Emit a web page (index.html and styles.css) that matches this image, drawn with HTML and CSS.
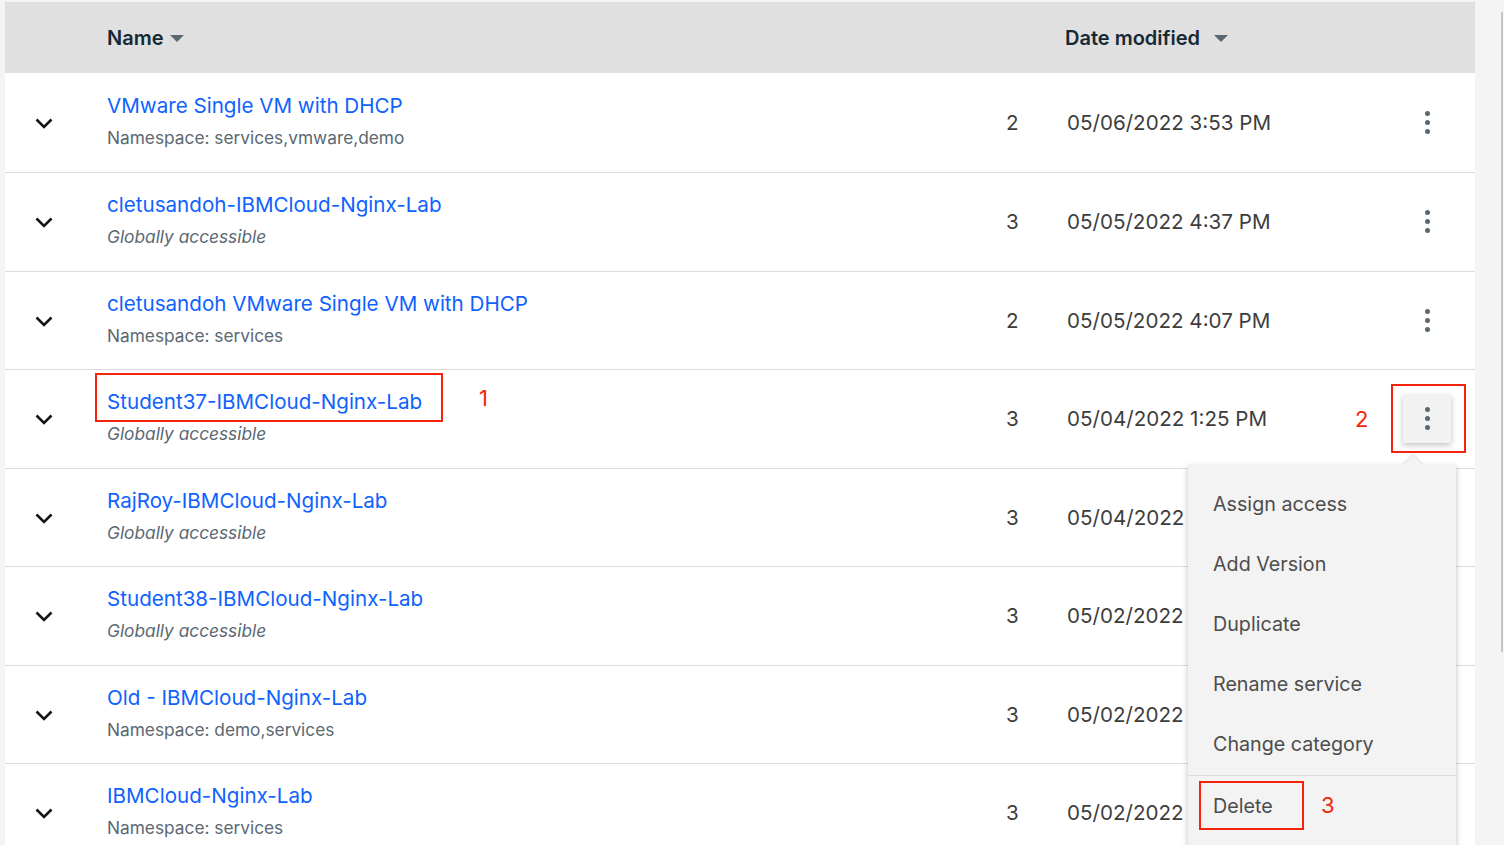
FILE: index.html
```html
<!DOCTYPE html>
<html>
<head>
<meta charset="utf-8">
<link rel="stylesheet" href="styles.css">
</head>
<body>
<div class="page">
  <div class="table">
    <div class="head">
      <div></div>
      <div class="th">Name <span class="sort"></span></div>
      <div></div>
      <div class="th th-date">Date modified <span class="sort sort-gap"></span></div>
      <div></div>
    </div>

    <div class="row">
      <div class="chev"><svg width="18" height="11" viewBox="0 0 18 11"><path d="M1.5 1.5 L9 9 L16.5 1.5" fill="none" stroke="#161616" stroke-width="2.6"/></svg></div>
      <div class="name"><a class="link">VMware Single VM with DHCP</a><div class="sub">Namespace: services,vmware,demo</div></div>
      <div class="ver">2</div>
      <div class="date">05/06/2022 3:53 PM</div>
      <div class="kebab"><span class="dots"><i></i><i></i><i></i></span></div>
    </div>

    <div class="row">
      <div class="chev"><svg width="18" height="11" viewBox="0 0 18 11"><path d="M1.5 1.5 L9 9 L16.5 1.5" fill="none" stroke="#161616" stroke-width="2.6"/></svg></div>
      <div class="name"><a class="link">cletusandoh-IBMCloud-Nginx-Lab</a><div class="sub italic">Globally accessible</div></div>
      <div class="ver">3</div>
      <div class="date">05/05/2022 4:37 PM</div>
      <div class="kebab"><span class="dots"><i></i><i></i><i></i></span></div>
    </div>

    <div class="row">
      <div class="chev"><svg width="18" height="11" viewBox="0 0 18 11"><path d="M1.5 1.5 L9 9 L16.5 1.5" fill="none" stroke="#161616" stroke-width="2.6"/></svg></div>
      <div class="name"><a class="link">cletusandoh VMware Single VM with DHCP</a><div class="sub">Namespace: services</div></div>
      <div class="ver">2</div>
      <div class="date">05/05/2022 4:07 PM</div>
      <div class="kebab"><span class="dots"><i></i><i></i><i></i></span></div>
    </div>

    <div class="row">
      <div class="chev"><svg width="18" height="11" viewBox="0 0 18 11"><path d="M1.5 1.5 L9 9 L16.5 1.5" fill="none" stroke="#161616" stroke-width="2.6"/></svg></div>
      <div class="name"><a class="link">Student37-IBMCloud-Nginx-Lab</a><div class="sub italic">Globally accessible</div></div>
      <div class="ver">3</div>
      <div class="date">05/04/2022 1:25 PM</div>
      <div class="kebab"><span class="dots active"><i></i><i></i><i></i></span></div>
    </div>

    <div class="row">
      <div class="chev"><svg width="18" height="11" viewBox="0 0 18 11"><path d="M1.5 1.5 L9 9 L16.5 1.5" fill="none" stroke="#161616" stroke-width="2.6"/></svg></div>
      <div class="name"><a class="link">RajRoy-IBMCloud-Nginx-Lab</a><div class="sub italic">Globally accessible</div></div>
      <div class="ver">3</div>
      <div class="date">05/04/2022</div>
      <div class="kebab"><span class="dots"><i></i><i></i><i></i></span></div>
    </div>

    <div class="row">
      <div class="chev"><svg width="18" height="11" viewBox="0 0 18 11"><path d="M1.5 1.5 L9 9 L16.5 1.5" fill="none" stroke="#161616" stroke-width="2.6"/></svg></div>
      <div class="name"><a class="link">Student38-IBMCloud-Nginx-Lab</a><div class="sub italic">Globally accessible</div></div>
      <div class="ver">3</div>
      <div class="date">05/02/2022</div>
      <div class="kebab"><span class="dots"><i></i><i></i><i></i></span></div>
    </div>

    <div class="row">
      <div class="chev"><svg width="18" height="11" viewBox="0 0 18 11"><path d="M1.5 1.5 L9 9 L16.5 1.5" fill="none" stroke="#161616" stroke-width="2.6"/></svg></div>
      <div class="name"><a class="link">Old - IBMCloud-Nginx-Lab</a><div class="sub">Namespace: demo,services</div></div>
      <div class="ver">3</div>
      <div class="date">05/02/2022</div>
      <div class="kebab"><span class="dots"><i></i><i></i><i></i></span></div>
    </div>

    <div class="row">
      <div class="chev"><svg width="18" height="11" viewBox="0 0 18 11"><path d="M1.5 1.5 L9 9 L16.5 1.5" fill="none" stroke="#161616" stroke-width="2.6"/></svg></div>
      <div class="name"><a class="link">IBMCloud-Nginx-Lab</a><div class="sub">Namespace: services</div></div>
      <div class="ver">3</div>
      <div class="date">05/02/2022</div>
      <div class="kebab"><span class="dots"><i></i><i></i><i></i></span></div>
    </div>
  </div>

  <div class="menu">
    <span class="caret"></span>
    <div class="item">Assign access</div>
    <div class="item">Add Version</div>
    <div class="item">Duplicate</div>
    <div class="item">Rename service</div>
    <div class="item">Change category</div>
    <div class="item item-sep">Delete</div>
  </div>

  <div class="mark box1"></div>
  <div class="num n1">1</div>
  <div class="mark box2"></div>
  <div class="num n2">2</div>
  <div class="mark box3"></div>
  <div class="num n3">3</div>

  <div class="scroll"></div>
</div>
</body>
</html>
```

FILE: styles.css
```css
* { box-sizing: border-box; }
html, body { margin: 0; padding: 0; }
body {
  background: #f4f4f4;
  font-family: Inter, "Liberation Sans", Arial, sans-serif;
  width: 1504px;
  height: 845px;
  overflow: hidden;
}
.page {
  position: relative;
  padding: 2px 29px 0 5px;
  height: 845px;
}
.table {
  background: #ffffff;
  width: 1470px;
}
.head, .row {
  display: grid;
  grid-template-columns: 102px 898px 62px 1fr 48px;
  padding-right: 24px;
  align-items: center;
}
.head {
  background: #e0e0e0;
  height: 71px;
}
.th {
  font-size: 20px;
  font-weight: 600;
  color: #152935;
  display: flex;
  align-items: center;
  gap: 6px;
}
.th:first-of-type { margin-left: -1px; }
.th-date { margin-left: -2px; }
.sort {
  width: 0;
  height: 0;
  border-left: 7px solid transparent;
  border-right: 7px solid transparent;
  border-top: 7px solid #5a6872;
  margin-top: 1px;
}
.sort-gap { margin-left: 8px; }
.row {
  height: 98.5px;
  border-top: 1px solid #dcdcdc;
}
.head + .row { border-top: none; height: 99px; }
.chev {
  display: flex;
  justify-content: center;
  padding-top: 2px;
  margin-left: -25px;
}
.chev svg { display: block; }
.name { display: flex; flex-direction: column; }
.link {
  font-size: 20.6px;
  line-height: 30px;
  margin-top: -2px;
  color: #0f62fe;
  text-decoration: none;
}
.sub {
  font-size: 17.3px;
  line-height: 28px;
  margin-top: 3px;
  color: #5a6872;
}
.italic { font-style: italic; }
.ver, .date {
  font-size: 20.6px;
  color: #3d3d3d;
}
.ver { padding-left: 1px; }
.date { white-space: nowrap; }
.kebab {
  display: flex;
  justify-content: center;
  align-items: center;
}
.dots {
  width: 48px;
  height: 48px;
  display: flex;
  flex-direction: column;
  align-items: center;
  justify-content: center;
  gap: 4px;
}
.dots i {
  display: block;
  width: 5px;
  height: 5px;
  border-radius: 50%;
  background: #5a6872;
}
.dots.active {
  background: #f2f2f2;
  box-shadow: 0 2px 6px rgba(0,0,0,0.25);
}
.menu {
  position: absolute;
  left: 1188px;
  top: 465px;
  width: 268px;
  height: 400px;
  background: #f3f3f3;
  box-shadow: 0 2px 6px rgba(0,0,0,0.25);
  padding-top: 9px;
}
.caret {
  position: absolute;
  top: -7px;
  left: 218px;
  width: 14px;
  height: 14px;
  background: #f3f3f3;
  transform: rotate(45deg);
  box-shadow: -1px -1px 2px rgba(0,0,0,0.12);
}
.item {
  position: relative;
  height: 60px;
  line-height: 60px;
  padding-left: 25px;
  font-size: 19.7px;
  color: #4d4d4d;
}
.item-sep {
  border-top: 1px solid #dcdcdc;
  margin-top: 1px;
}
.mark {
  position: absolute;
  border: 2px solid #f5230b;
}
.box1 { left: 95px; top: 373px; width: 348px; height: 49px; }
.box2 { left: 1391px; top: 384px; width: 75px; height: 69px; }
.box3 { left: 1199px; top: 781px; width: 105px; height: 49px; }
.num {
  position: absolute;
  color: #f5230b;
  font-size: 22px;
  line-height: 24px;
}
.n1 { left: 479px; top: 386px; }
.n2 { left: 1355px; top: 407px; }
.n3 { left: 1321px; top: 793px; }
.scroll {
  position: absolute;
  right: 1px;
  top: 12px;
  width: 2px;
  height: 640px;
  background: #c4c4c4;
}
```
